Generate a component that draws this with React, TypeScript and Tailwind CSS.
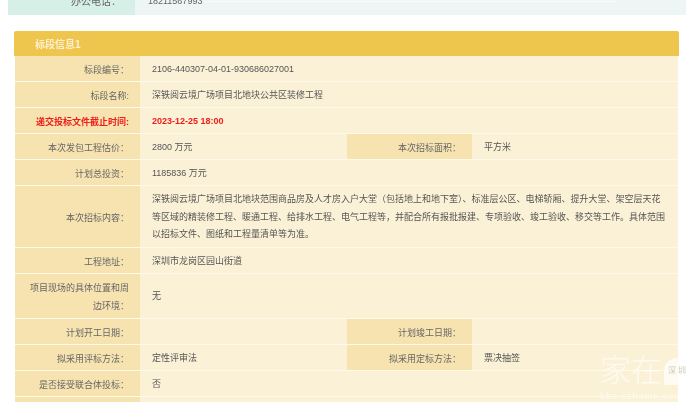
import type { ReactNode } from "react";

const font = "font-['Liberation_Sans','Noto_Sans_CJK_SC',sans-serif]";

function Label({ children, red }: { children?: ReactNode; red?: boolean }) {
  return (
    <div
      className={`flex w-[125px] shrink-0 items-center justify-end bg-[#f6e3b0] pl-2 pr-[11px] pt-[2px] text-right leading-[18px] ${
        red ? "font-bold text-[#ee1c1c]" : "text-[#666]"
      }`}
    >
      {children}
    </div>
  );
}

function Value({ children, red, grow }: { children?: ReactNode; red?: boolean; grow?: boolean }) {
  return (
    <div
      className={`flex items-center bg-[#fbf1d6] pl-[12px] pr-[10px] pt-[2px] leading-[17.5px] ${
        grow ? "flex-1" : "w-[207px] shrink-0"
      } ${red ? "font-bold text-[#ee1c1c]" : "text-[#555]"}`}
    >
      <div>{children}</div>
    </div>
  );
}

function Row({ h, children }: { h: string; children: ReactNode }) {
  return <div className={`flex border-b border-[#fff9ea] ${h}`}>{children}</div>;
}

export default function App() {
  return (
    <div className={`relative h-[402px] w-[700px] overflow-hidden bg-white text-[9px] blur-[0.3px] ${font}`}>
      <div className="ml-2 mr-[14px] -mt-[12px] flex h-[27px] text-[10px] text-[#666]">
        <div className="flex w-[127px] items-center justify-end bg-[#d6efe7] pr-[14px]">办公电话：</div>
        <div className="relative flex flex-1 items-center bg-[#edf6f4] pl-[13px] text-[9px]">
          18211567993
          <div className="absolute inset-x-[70px] top-[13px] h-px bg-white/70" />
        </div>
      </div>

      <div className="ml-[14px] mr-[21px] mt-4">
        <div className="flex h-[25px] items-center rounded-t-[2px] bg-[#eec64d] pl-[21px] pt-[1px] text-[10px] font-bold text-[#fdf0d0]">
          标段信息1
        </div>
        <div className="mx-px">
          <Row h="h-[26px]">
            <Label>标段编号：</Label>
            <Value grow>2106-440307-04-01-930686027001</Value>
          </Row>
          <Row h="h-[26px]">
            <Label>标段名称:</Label>
            <Value grow>深铁阅云境广场项目北地块公共区装修工程</Value>
          </Row>
          <Row h="h-[26px]">
            <Label red>递交投标文件截止时间:</Label>
            <Value grow red>2023-12-25 18:00</Value>
          </Row>
          <Row h="h-[26px]">
            <Label>本次发包工程估价：</Label>
            <Value>2800 万元</Value>
            <Label>本次招标面积：</Label>
            <Value grow>平方米</Value>
          </Row>
          <Row h="h-[26px]">
            <Label>计划总投资：</Label>
            <Value grow>1185836 万元</Value>
          </Row>
          <Row h="h-[62px]">
            <Label>本次招标内容：</Label>
            <Value grow>
              深铁阅云境广场项目北地块范围商品房及人才房入户大堂（包括地上和地下室）、标准层公区、电梯轿厢、提升大堂、架空层天花等区域的精装修工程、暖通工程、给排水工程、电气工程等，并配合所有报批报建、专项验收、竣工验收、移交等工作。具体范围以招标文件、图纸和工程量清单等为准。
            </Value>
          </Row>
          <Row h="h-[26px]">
            <Label>工程地址：</Label>
            <Value grow>深圳市龙岗区园山街道</Value>
          </Row>
          <Row h="h-[45px]">
            <Label>项目现场的具体位置和周边环境：</Label>
            <Value grow>无</Value>
          </Row>
          <Row h="h-[26px]">
            <Label>计划开工日期：</Label>
            <Value />
            <Label>计划竣工日期：</Label>
            <Value grow />
          </Row>
          <Row h="h-[26px]">
            <Label>拟采用评标方法：</Label>
            <Value>定性评审法</Value>
            <Label>拟采用定标方法：</Label>
            <Value grow>票决抽签</Value>
          </Row>
          <Row h="h-[26px]">
            <Label>是否接受联合体投标：</Label>
            <Value grow>否</Value>
          </Row>
          <Row h="h-[26px]">
            <Label />
            <Value grow />
          </Row>
        </div>
      </div>

      {/* watermark */}
      <div className="absolute left-[600px] top-[352px] text-white/65">
        <div className="flex items-center">
          <span className="text-[31px] font-light leading-[38px]">家在</span>
          <span className="ml-[2px] flex h-[27px] w-[28px] items-center justify-center rounded-[13px] rounded-bl-none bg-white/70 text-[8px] tracking-[2px] text-[#cfc8b8]">
            深圳
          </span>
        </div>
        <div className="text-[9.5px] leading-[11px] tracking-[0.8px] text-white/60">bbs.szhome.com</div>
      </div>
    </div>
  );
}
